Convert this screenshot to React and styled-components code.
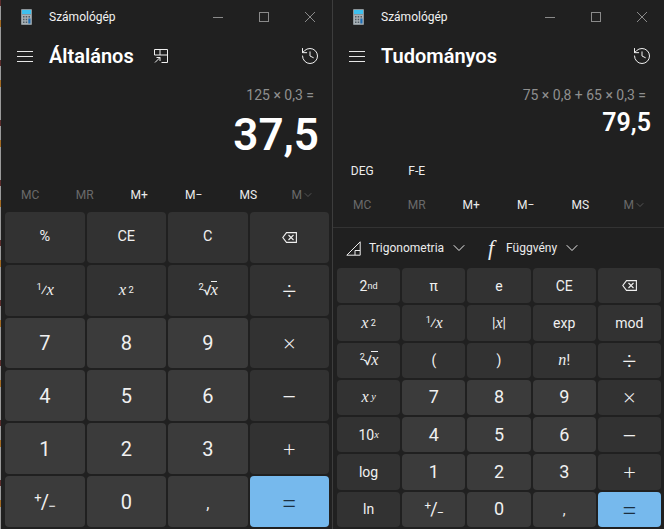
import React from "react";
import styled, { createGlobalStyle } from "styled-components";
import { History, ChevronDown } from "lucide-react";

const Global = createGlobalStyle`
  html, body { margin: 0; padding: 0; background: #202020; }
  * { box-sizing: border-box; }
  body { font-family: Roboto, "Noto Sans", sans-serif; color: #fff; }
`;

const Stage = styled.div`
  display: flex;
  width: 664px;
  height: 529px;
  overflow: hidden;
  background: #202020;
`;
const DesktopEdge = styled.div`
  width: 1px;
  flex: none;
  background: repeating-linear-gradient(180deg, #5c2c2c 0 6px, #9a9a9a 6px 20px, #a26a22 20px 27px, #9a9a9a 27px 60px);
`;
const Divider = styled.div`
  width: 1px;
  flex: none;
  background: #3d3d3d;
`;
const Win = styled.section`
  width: 331px;
  flex: none;
  display: flex;
  flex-direction: column;
  background: #202020;
`;
const TitleBar = styled.header`
  height: 33px;
  display: flex;
  align-items: center;
  padding: 0 0 0 20px;
  font-size: 12px;
  color: #f2f2f2;
`;
const TitleText = styled.span`
  margin-left: 17px;
  flex: 1;
`;
const Caption = styled.div`
  display: flex;
  align-items: center;
  margin-right: -1px;
`;
const CaptionBtn = styled.span`
  width: 46px;
  display: flex;
  justify-content: center;
  color: #8a8a8a;
`;
const Header = styled.div`
  height: 46px;
  display: flex;
  align-items: center;
  padding: 0 12px 0 16px;
`;
const Heading = styled.h1`
  margin: 0 0 0 16px;
  font-size: 20px;
  font-weight: 600;
  line-height: 46px;
`;
const HistoryBtn = styled.span`
  margin-left: auto;
  display: flex;
  color: #f0f0f0;
`;
const PinBtn = styled.span`
  margin-left: 20px;
  display: flex;
  color: #f0f0f0;
`;
const Display = styled.div`
  flex: ${(p) => (p.$grow ? 1 : "none")};
  display: flex;
  flex-direction: column;
  align-items: flex-end;
  padding: 5px 13px 0 0;
`;
const Expr = styled.div`
  font-size: 14px;
  line-height: 22px;
  color: #8f8f8f;
  padding-right: 5px;
`;
const Value = styled.div`
  font-size: ${(p) => (p.$big ? 44 : 25)}px;
  line-height: ${(p) => (p.$big ? 60 : 32)}px;
  font-weight: 600;
  margin-top: ${(p) => (p.$big ? -1 : 1)}px;
`;
const Modes = styled.div`
  display: grid;
  grid-template-columns: repeat(2, 54.5px);
  height: 30px;
  margin-top: 17px;
  padding-left: 2px;
  align-items: center;
  justify-items: center;
  font-size: 12px;
  color: #ececec;
`;
const Memory = styled.div`
  display: grid;
  grid-template-columns: repeat(6, 54.5px);
  height: 28px;
  margin-top: ${(p) => p.$mt || 0}px;
  padding: 2px 0 0 2px;
  align-items: center;
  justify-items: center;
  font-size: 12px;
`;
const Mem = styled.span`
  color: ${(p) => (p.$off ? "#6a6a6a" : "#ececec")};
  display: inline-flex;
  align-items: center;
`;
const Rule = styled.div`
  height: 1px;
  margin-top: 9px;
  background: #333;
`;
const Toolbar = styled.div`
  height: 40px;
  display: flex;
  align-items: center;
  padding-left: 13px;
  font-size: 12px;
  color: #ececec;
`;
const ToolLabel = styled.span`
  margin-left: ${(p) => p.$ml}px;
  margin-right: 5px;
`;
const FnGlyph = styled.i`
  font-family: "Liberation Serif", serif;
  font-size: 22px;
  margin-left: 16px;
  width: 12px;
  text-align: center;
`;
const Keys = styled.div`
  display: grid;
  grid-template-columns: repeat(${(p) => p.$cols}, 1fr);
  grid-template-rows: repeat(${(p) => p.$rows}, 1fr);
  gap: 2px;
  height: ${(p) => p.$h}px;
  margin: ${(p) => p.$top}px 3px 2px 4px;
`;
const Key = styled.div`
  display: flex;
  align-items: center;
  justify-content: center;
  border-radius: 4px;
  background: ${(p) => (p.$kind === "num" ? "#3b3b3b" : p.$kind === "eq" ? "#76b9ed" : "#323232")};
  color: ${(p) => (p.$kind === "eq" ? "#1b2f40" : "#f0f0f0")};
  font-size: ${(p) => (p.$kind === "num" ? p.$numSize : p.$size)}px;
  line-height: 1;
  white-space: nowrap;
`;
const Op = styled.span`
  font-family: "Inter", sans-serif;
  font-weight: 200;
  font-size: ${(p) => p.$size}px;
  padding-bottom: 2px;
`;
const MathVar = styled.span`
  font-family: "Liberation Serif", serif;
  font-style: italic;
  font-size: 1.15em;
`;
const Up = styled.sup`
  font-size: 0.65em;
  line-height: 0;
  vertical-align: 0.55em;
`;
const Down = styled.sub`
  font-size: 0.7em;
  line-height: 0;
  vertical-align: -0.15em;
`;
const Tight = styled.span`
  letter-spacing: -0.9px;
`;
const Radicand = styled.span`
  border-top: 1px solid currentColor;
  line-height: 1;
`;
const Comma = styled.span`
  font-size: 0.8em;
  padding-top: 4px;
`;

const CalcIcon = () => (
  <svg width="11" height="16" viewBox="0 0 11 16">
    <rect width="11" height="16" rx="1" fill="#8b9499" />
    <rect x="1" y="1" width="9" height="4" fill="#3ec0ee" />
    <rect x="1" y="6" width="9" height="9" fill="#a9b2b7" />
    <path d="M2 7h1.5v1.5H2zM4.7 7h1.5v1.5H4.7zM7.5 7H9v1.5H7.5zM2 9.7h1.5v1.5H2zM4.7 9.7h1.5v1.5H4.7zM2 12.4h1.5v1.5H2zM4.7 12.4h1.5v1.5H4.7z" fill="#4f5b63" />
    <rect x="7.3" y="9.5" width="2.2" height="5" fill="#1f6fb5" />
  </svg>
);
const MinimizeIcon = () => (
  <svg width="10" height="10" viewBox="0 0 10 10" stroke="currentColor"><path d="M0 5.5h10" /></svg>
);
const MaximizeIcon = () => (
  <svg width="10" height="10" viewBox="0 0 10 10" fill="none" stroke="currentColor"><rect x=".5" y=".5" width="9" height="9" /></svg>
);
const CloseIcon = () => (
  <svg width="10" height="10" viewBox="0 0 10 10" stroke="currentColor"><path d="M0 0l10 10M10 0L0 10" /></svg>
);
const HamburgerIcon = () => (
  <svg width="16" height="11" viewBox="0 0 16 11" stroke="#e6e6e6"><path d="M0 .5h16M0 5.5h16M0 10.5h16" /></svg>
);
const PinIcon = () => (
  <svg width="14" height="14" viewBox="0 0 14 14" fill="none" stroke="currentColor" strokeWidth="1">
    <path d="M.5.5h13v13h-6M.5.5V6h13M6 .5V6" />
    <path d="M1 13.5l5-5M2.5 8.5H6V12" />
  </svg>
);
const BackIcon = () => (
  <svg width="15" height="11" viewBox="0 0 15 11" fill="none" stroke="currentColor" strokeWidth="1.1">
    <path d="M4.5.6h9.9v9.8H4.5L.8 5.5z" />
    <path d="M6.5 3l5 5M11.5 3l-5 5" />
  </svg>
);
const TriIcon = () => (
  <svg width="15" height="15" viewBox="0 0 15 15" fill="none" stroke="currentColor" strokeWidth="1">
    <path d="M.8 14.2L14.2.8v13.4zM9 14V9.5h5" />
  </svg>
);

const Titlebar = () => (
  <TitleBar>
    <CalcIcon />
    <TitleText>Számológép</TitleText>
    <Caption>
      <CaptionBtn><MinimizeIcon /></CaptionBtn>
      <CaptionBtn><MaximizeIcon /></CaptionBtn>
      <CaptionBtn><CloseIcon /></CaptionBtn>
    </Caption>
  </TitleBar>
);

const Mems = ({ mt }) => (
  <Memory $mt={mt}>
    <Mem $off>MC</Mem>
    <Mem $off>MR</Mem>
    <Mem>M+</Mem>
    <Mem>M−</Mem>
    <Mem>MS</Mem>
    <Mem $off>M<ChevronDown size={12} strokeWidth={1.4} /></Mem>
  </Memory>
);

const x = <MathVar>x</MathVar>;
const opSizes = { "÷": 28, "×": 22, "−": 26, "+": 24, "=": 30 };
const op = (c) => ({ l: <Op $size={opSizes[c]}>{c}</Op> });
const fn = (l) => ({ l });
const num = (l) => ({ l, kind: "num" });
const inverse = <Tight><Up>1</Up>⁄{x}</Tight>;
const root = <Tight><Up>2</Up>√<Radicand>{x}</Radicand></Tight>;
const square = <>{x}<Up>&nbsp;2</Up></>;
const sign = <Tight><Up>+</Up>/<Down>−</Down></Tight>;
const comma = <Comma>,</Comma>;

const standard = [
  fn("%"), fn("CE"), fn("C"), fn(<BackIcon />),
  fn(inverse), fn(square), fn(root), op("÷"),
  num("7"), num("8"), num("9"), op("×"),
  num("4"), num("5"), num("6"), op("−"),
  num("1"), num("2"), num("3"), op("+"),
  num(sign), num("0"), num(comma), { ...op("="), kind: "eq" },
];
const scientific = [
  fn(<>2<Up>nd</Up></>), fn("π"), fn("e"), fn("CE"), fn(<BackIcon />),
  fn(square), fn(inverse), fn(<>|{x}|</>), fn("exp"), fn("mod"),
  fn(root), fn("("), fn(")"), fn(<><MathVar>n</MathVar>!</>), op("÷"),
  fn(<>{x}<Up><MathVar>&nbsp;y</MathVar></Up></>), num("7"), num("8"), num("9"), op("×"),
  fn(<>10<Up><MathVar>x</MathVar></Up></>), num("4"), num("5"), num("6"), op("−"),
  fn("log"), num("1"), num("2"), num("3"), op("+"),
  fn("ln"), num(sign), num("0"), num(comma), { ...op("="), kind: "eq" },
];

const Pad = ({ items, cols, rows, h, top, size, numSize }) => (
  <Keys $cols={cols} $rows={rows} $h={h} $top={top}>
    {items.map((k, i) => (
      <Key key={i} $kind={k.kind} $size={size} $numSize={numSize}>{k.l}</Key>
    ))}
  </Keys>
);

export default function App() {
  return (
    <Stage>
      <Global />
      <DesktopEdge />
      <Win>
        <Titlebar />
        <Header>
          <HamburgerIcon />
          <Heading>Általános</Heading>
          <PinBtn><PinIcon /></PinBtn>
          <HistoryBtn><History size={20} strokeWidth={1.2} /></HistoryBtn>
        </Header>
        <Display $grow>
          <Expr>125 × 0,3 =</Expr>
          <Value $big>37,5</Value>
        </Display>
        <Mems />
        <Pad items={standard} cols={4} rows={6} h={315} top={4} size={14.5} numSize={20} />
      </Win>
      <Divider />
      <Win>
        <Titlebar />
        <Header>
          <HamburgerIcon />
          <Heading>Tudományos</Heading>
          <HistoryBtn><History size={20} strokeWidth={1.2} /></HistoryBtn>
        </Header>
        <Display>
          <Expr>75 × 0,8 + 65 × 0,3 =</Expr>
          <Value>79,5</Value>
        </Display>
        <Modes><span>DEG</span><span>F-E</span></Modes>
        <Mems mt={4} />
        <Rule />
        <Toolbar>
          <TriIcon />
          <ToolLabel $ml={8}>Trigonometria</ToolLabel>
          <ChevronDown size={20} strokeWidth={1.2} />
          <FnGlyph>f</FnGlyph>
          <ToolLabel $ml={9}>Függvény</ToolLabel>
          <ChevronDown size={20} strokeWidth={1.2} />
        </Toolbar>
        <Pad items={scientific} cols={5} rows={7} h={259} top={0} size={14} numSize={18} />
      </Win>
    </Stage>
  );
}
